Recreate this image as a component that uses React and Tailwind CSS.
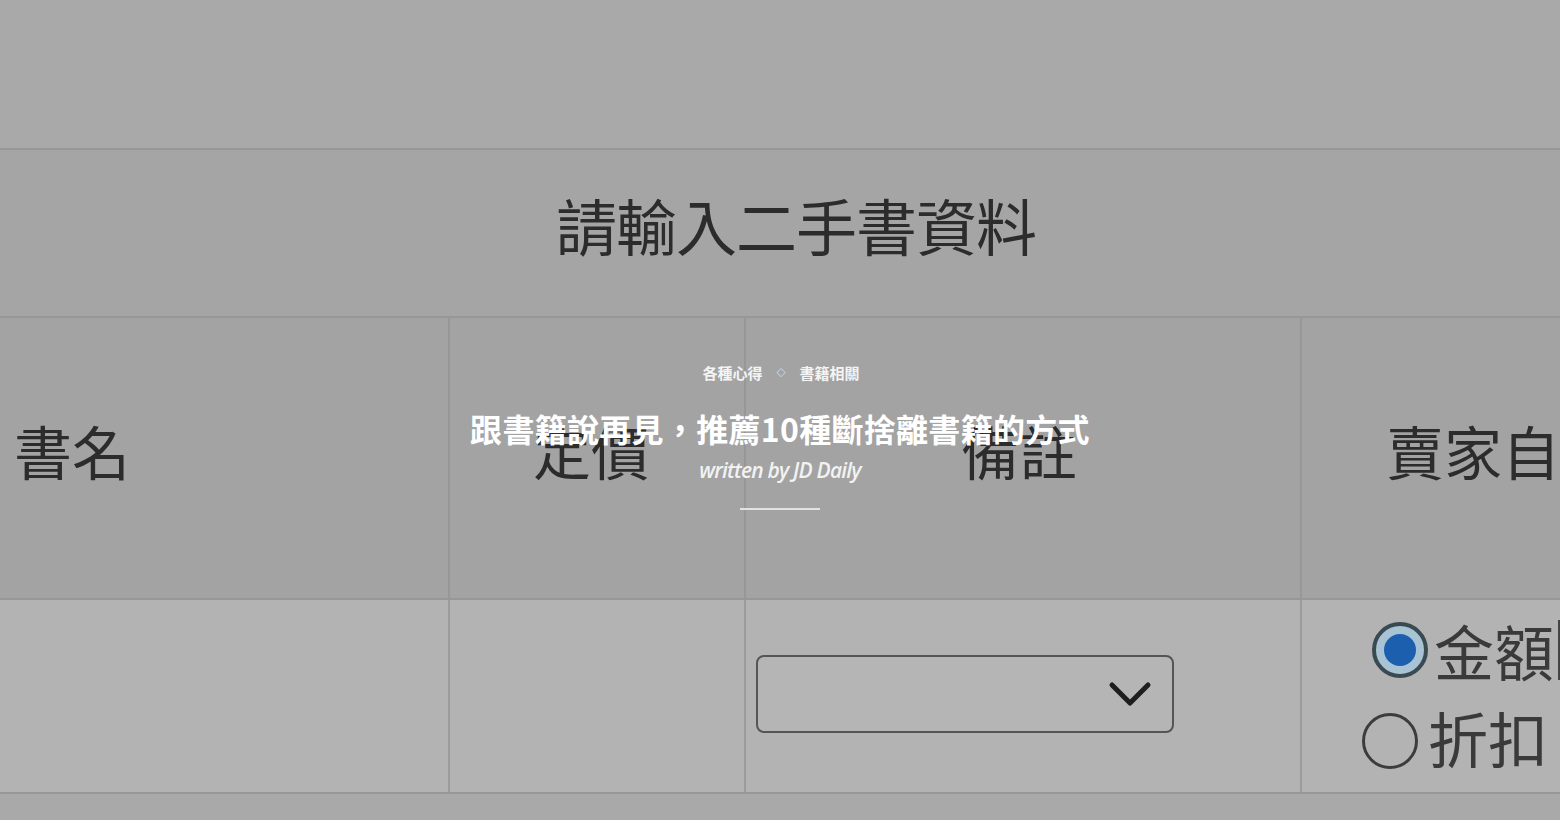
import React from 'react';

const cjk = { fontFamily: '"Noto Sans CJK TC", "Noto Sans", sans-serif' };

function Radio({ checked }) {
  if (checked) {
    return (
      <span className="w-[56px] h-[56px] rounded-full border-[4px] border-[#3a4a52] bg-[#a8c4d4] flex items-center justify-center shrink-0">
        <span className="w-[32px] h-[32px] rounded-full bg-[#1c5fae]" />
      </span>
    );
  }
  return <span className="w-[56px] h-[56px] rounded-full border-[3px] border-[#3c3c3c] shrink-0" />;
}

export default function App() {
  return (
    <div className="relative w-[1560px] h-[820px] overflow-hidden bg-[#a9a9a9] text-[#2c2c2c]" style={cjk}>
      {/* background: the blurred form screenshot */}
      <div className="h-[148px] bg-[#a9a9a9]" />
      <div className="h-[2px] bg-[#979797]" />
      <div className="h-[166px] bg-[#a5a5a5] flex items-center justify-center">
        <span className="text-[61px] leading-none pb-[18px] pl-[32px] tracking-[-1px]">請輸入二手書資料</span>
      </div>
      <div className="h-[2px] bg-[#979797]" />
      <div className="h-[280px] bg-[#a3a3a3] grid grid-cols-[448px_2px_294px_2px_554px_2px_1fr]">
        <div className="flex items-center pl-[14px] pb-[16px] text-[58px] leading-none">書名</div>
        <div className="bg-[#979797]" />
        <div className="flex items-center justify-center pb-[16px] pr-[12px] text-[58px] leading-none">定價</div>
        <div className="bg-[#979797]" />
        <div className="flex items-center justify-center pb-[16px] pr-[8px] text-[58px] leading-none">備註</div>
        <div className="bg-[#979797]" />
        <div className="flex items-center pl-[84px] pb-[16px] text-[58px] leading-none whitespace-nowrap overflow-hidden">賣家自訂</div>
      </div>
      <div className="h-[2px] bg-[#979797]" />
      <div className="h-[192px] bg-[#b3b3b3] grid grid-cols-[448px_2px_294px_2px_554px_2px_1fr]">
        <div />
        <div className="bg-[#9c9c9c]" />
        <div />
        <div className="bg-[#9c9c9c]" />
        <div className="pl-[10px] pt-[55px]">
          <div className="w-[418px] h-[78px] rounded-[8px] border-[2px] border-[#555] bg-[#b5b5b5] flex items-center justify-end pr-[20px]">
            <svg width="44" height="28" viewBox="0 0 44 28" fill="none" stroke="#1e1e1e" strokeWidth="5" strokeLinecap="round" strokeLinejoin="round">
              <path d="M4 5 L22 23 L40 5" />
            </svg>
          </div>
        </div>
        <div className="bg-[#9c9c9c]" />
        <div className="flex flex-col pt-[12px] overflow-hidden">
          <div className="flex items-center gap-[6px] pl-[70px] h-[76px] whitespace-nowrap">
            <Radio checked />
            <span className="text-[60px] leading-none text-[#3a3a3a] border-r-[3px] border-[#444] pr-[4px]">金額</span>
          </div>
          <div className="flex items-center gap-[10px] pl-[60px] h-[84px] pt-[22px] whitespace-nowrap">
            <Radio />
            <span className="text-[60px] leading-none text-[#3a3a3a] pb-[8px]">折扣</span>
          </div>
        </div>
      </div>
      <div className="h-[2px] bg-[#979797]" />

      {/* hero overlay */}
      <div className="absolute inset-0 flex flex-col items-center pt-[362px] text-white">
        <div className="flex items-center gap-[12px] pl-[2px] text-[15px] font-bold leading-[22px] text-[#f4f4f4]">
          <span>各種心得</span>
          <span className="text-[9px] px-[2px]">◇</span>
          <span>書籍相關</span>
        </div>
        <h1 className="mt-[22px] text-[32px] font-bold leading-[44px] tracking-[0.3px]">跟書籍說再見，推薦10種斷捨離書籍的方式</h1>
        <div className="mt-[6px] text-[21px] italic font-semibold leading-[28px] tracking-[-0.8px] text-[#f2f2f2]" style={{ fontFamily: '"Open Sans", sans-serif' }}>
          written by JD Daily
        </div>
        <div className="mt-[24px] w-[80px] h-[2px] bg-[#e2e2e2]" />
      </div>
    </div>
  );
}
